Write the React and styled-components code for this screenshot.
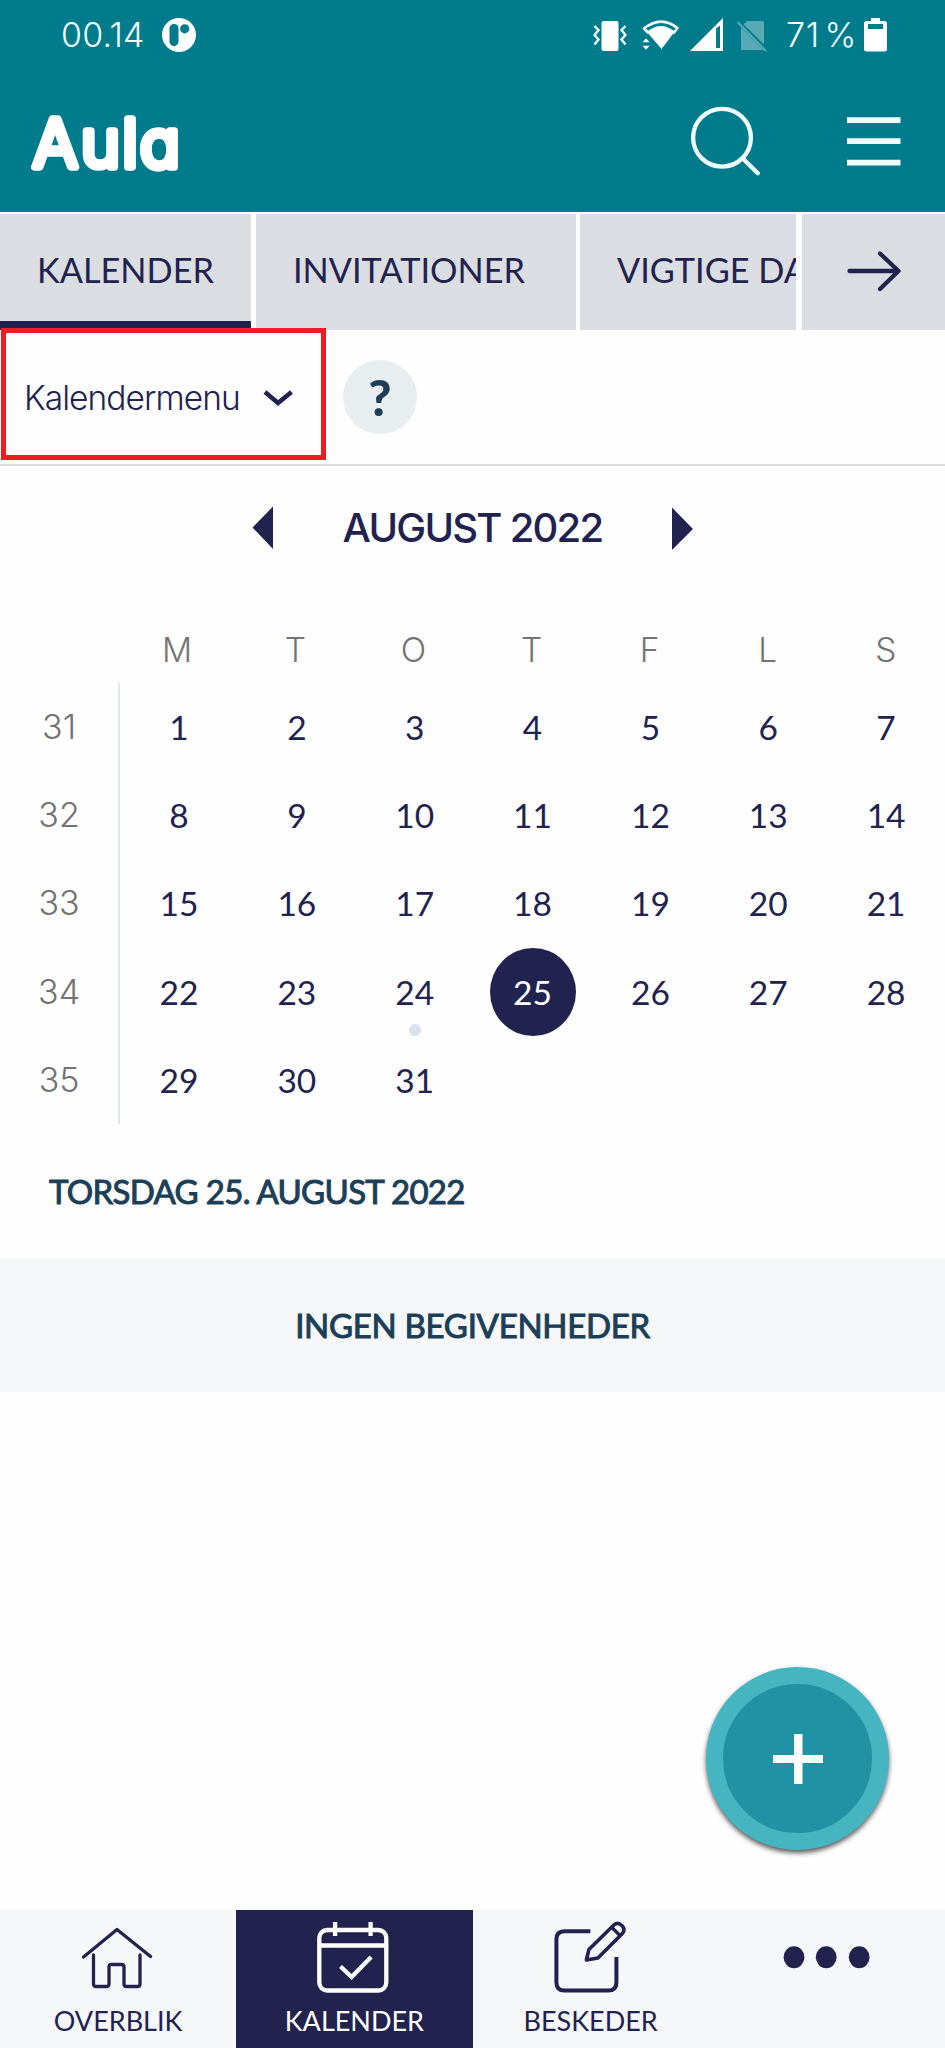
import React from 'react';
import styled, { createGlobalStyle } from 'styled-components';

const teal = '#007b8c';
const navy = '#22224f';
const petrol = '#1c3f57';
const mist = '#f5f7f9';
const slate = '#dadee2';
const lato = "Lato, 'Liberation Sans', sans-serif";
const inter = "Inter, 'Liberation Sans', sans-serif";

const GlobalStyle = createGlobalStyle`
  * { box-sizing: border-box; }
  body { margin: 0; background: #fefefe; }
  svg { display: block; flex: none; }
`;

const Screen = styled.div`
  position: relative;
  width: 945px;
  height: 2048px;
  display: flex;
  flex-direction: column;
  overflow: hidden;
  background: #fefefe;
  color: ${navy};
  font-family: ${lato};
`;

const StatusBar = styled.div`
  height: 70px;
  flex: none;
  display: flex;
  align-items: center;
  padding: 0 58px 0 61px;
  background: ${teal};
  color: #f2ffff;
`;

const StatusText = styled.span`
  width: ${(p) => p.$width}px;
  font: 300 34px/40px ${inter};
  letter-spacing: ${(p) => p.$spacing}px;
  white-space: nowrap;
`;

const PercentSign = styled.span`
  margin-left: 5px;
`;

const StatusIcons = styled.div`
  margin-left: auto;
  display: flex;
  align-items: center;
`;

const IconGap = styled.span`
  width: ${(p) => p.$width}px;
`;

const Header = styled.header`
  height: 142px;
  flex: none;
  display: flex;
  align-items: flex-start;
  padding: 24px 44px 0 30px;
  background: ${teal};
`;

const HeaderActions = styled.div`
  display: flex;
  gap: 86px;
  margin: 10px 0 0 auto;
`;

const LogoText = styled.text`
  font: 300 66px ${inter};
  font-feature-settings: 'cv11' 1;
  fill: #fff;
  stroke: #fff;
  stroke-width: 7.5px;
  stroke-linejoin: round;
`;

const TabBar = styled.nav`
  height: 118px;
  flex: none;
  display: flex;
  padding-top: 2px;
`;

const Tab = styled.div`
  width: ${(p) => p.$width}px;
  margin-right: ${(p) => p.$gap}px;
  flex: none;
  display: flex;
  align-items: center;
  padding: 0 0 4px 37px;
  overflow: hidden;
  white-space: nowrap;
  background: ${slate};
  box-shadow: ${(p) => (p.$active ? `inset 0 -9px ${navy}` : 'none')};
  font-size: 34.3px;
  line-height: 40px;
`;

const TabArrow = styled.div`
  flex: 1;
  display: flex;
  align-items: center;
  justify-content: center;
  background: ${slate};
`;

const Toolbar = styled.div`
  height: 136px;
  flex: none;
  display: flex;
  align-items: flex-start;
  padding-left: 1px;
  border-bottom: 2px solid #d9dadb;
`;

const MenuButton = styled.div`
  position: relative;
  top: -2px;
  width: 325px;
  height: 132px;
  display: flex;
  align-items: center;
  padding: 7px 0 0 18px;
  border: 5px solid #ec1c24;
  background: #fefefe;
`;

const MenuLabel = styled.span`
  width: 239px;
  font: 300 33.5px/40px ${inter};
  letter-spacing: -0.95px;
`;

const HelpButton = styled.div`
  width: 74px;
  height: 74px;
  margin: 30px 0 0 17px;
  border-radius: 50%;
  background: #e8edf0;
  color: ${petrol};
  font: 900 50px/74px ${lato};
  text-align: center;
`;

const MonthBar = styled.div`
  height: 126px;
  flex: none;
  display: flex;
  justify-content: space-between;
  align-items: center;
  padding: 0 252px 2px;
`;

const MonthTitle = styled.h1`
  margin: 0;
  font: 500 40px/48px ${inter};
  letter-spacing: -1.75px;
  white-space: nowrap;
`;

const WeekdayRow = styled.div`
  height: 91px;
  flex: none;
  display: grid;
  grid-template-columns: repeat(8, 1fr);
  align-items: end;
`;

const Weekday = styled.div`
  padding-bottom: 13px;
  text-align: center;
  color: #737373;
  font: 300 33.5px/40px ${inter};
`;

const Weeks = styled.div`
  height: 441px;
  flex: none;
  display: grid;
  grid-template-columns: 1fr 7fr;
`;

const WeekNumbers = styled.div`
  display: grid;
  grid-template-rows: repeat(5, 1fr);
  align-items: center;
  text-align: center;
  color: #737373;
  font: 300 34px/40px ${inter};
`;

const Days = styled.div`
  display: grid;
  grid-template-columns: repeat(7, 1fr);
  grid-template-rows: repeat(5, 1fr);
  place-items: center;
  border-left: 2px solid #dfe7eb;
`;

const Day = styled.div`
  position: relative;
  width: 86px;
  height: 88px;
  border-radius: 50%;
  background: ${(p) => (p.$selected ? navy : 'transparent')};
  color: ${(p) => (p.$selected ? '#fff' : navy)};
  font-size: 33.5px;
  line-height: 88px;
  text-align: center;
`;

const EventDot = styled.i`
  position: absolute;
  left: 37px;
  bottom: 0;
  width: 12px;
  height: 12px;
  border-radius: 50%;
  background: #d8e2ea;
`;

const DateHeading = styled.h2`
  height: 134px;
  flex: none;
  margin: 0;
  padding-left: 49px;
  color: ${petrol};
  font: 400 33px/134px ${lato};
  letter-spacing: -0.68px;
  -webkit-text-stroke: 1px ${petrol};
`;

const EmptyBand = styled.div`
  height: 134px;
  flex: none;
  background: ${mist};
  color: ${petrol};
  font: 400 33px/134px ${lato};
  letter-spacing: -0.3px;
  -webkit-text-stroke: 1px ${petrol};
  text-align: center;
`;

const AddButton = styled.div`
  position: absolute;
  left: 706px;
  top: 1667px;
  width: 183px;
  height: 183px;
  display: flex;
  align-items: center;
  justify-content: center;
  border: 17px solid #45b6c1;
  border-radius: 50%;
  background: #2191a4;
  box-shadow: 0 3px 5px rgba(0, 0, 0, 0.65);
`;

const BottomNav = styled.nav`
  height: 138px;
  flex: none;
  margin-top: auto;
  display: grid;
  grid-template-columns: repeat(4, 1fr);
  background: ${mist};
`;

const NavItem = styled.div`
  display: flex;
  flex-direction: column;
  align-items: center;
  padding-top: 8px;
  background: ${(p) => (p.$active ? navy : 'transparent')};
  color: ${(p) => (p.$active ? '#fff' : navy)};
`;

const NavLabel = styled.span`
  margin-top: 7px;
  font-size: 27px;
  line-height: 32px;
`;

const Logo = () => (
  <svg width="152" height="100" viewBox="30 94 152 100" role="img" aria-label="Aula">
    <LogoText x="33 81 122.300 140" y="166.500">Aula</LogoText>
  </svg>
);

const AppBadge = () => (
  <svg width="34" height="34" viewBox="162 18 34 34">
    <circle cx="179" cy="35" r="17" fill="#fff" />
    <rect x="169.5" y="24" width="9" height="22" rx="4.5" fill={teal} />
    <circle cx="184.7" cy="28.8" r="4.6" fill={teal} />
  </svg>
);

const VibrateIcon = () => (
  <svg width="34" height="34" viewBox="593 18 34 34" fill="none" stroke="#f2ffff" strokeWidth="2.4">
    <rect x="601.5" y="21" width="17" height="30" rx="2" fill="#fff" stroke="none" />
    <path d="M594.5 26l4 4-4 5 4 4.500-4 5M625.500 26l-4 4 4 5-4 4.500 4 5" />
  </svg>
);

const WifiIcon = () => (
  <svg width="38" height="34" viewBox="641 18 38 34">
    <path d="M644 28.500Q661 15 677.500 28L661.500 49Z" fill="#fff" />
    <path d="M644 28.500Q661 15 677.500 28L674 32.500Q661 22 648 32.500Z" fill={teal} stroke="#f2ffff" strokeWidth="2.600" strokeLinejoin="round" />
    <path d="M642 42.500l4-4.500 4 4.500zM642 45.500l4 4.500 4-4.500z" fill="#fff" stroke={teal} strokeWidth="0.500" />
  </svg>
);

const SignalIcon = () => (
  <svg width="34" height="34" viewBox="690 18 34 34">
    <path d="M690 51L723 18V51Z" fill="#fff" />
    <path d="M716 28.500L720 25.500V48H716Z" fill={teal} />
  </svg>
);

const NoSimIcon = () => (
  <svg width="32" height="34" viewBox="736 18 32 34">
    <path d="M747 21H762.500Q764 21 764 23V44.500L743.500 24.500ZM741 27.500V50H763.500Z" fill="#58a9b6" />
    <path d="M737.500 22L766 51" stroke="#58a9b6" strokeWidth="2" />
  </svg>
);

const BatteryIcon = () => (
  <svg width="23" height="34" viewBox="864 18 23 34">
    <path d="M871 18h9v3h4.500q2.500 0 2.500 2.500V49q0 2.500-2.500 2.500h-18Q864 51.500 864 49V23.500Q864 21 866.500 21H871Z" fill="#fff" />
    <rect x="868" y="24" width="15" height="5" fill={teal} />
  </svg>
);

const SearchIcon = () => (
  <svg width="70" height="72" viewBox="691 104 70 72" fill="none" stroke="#f2ffff" strokeWidth="4.300">
    <circle cx="722" cy="137.700" r="28.900" />
    <path d="M742.500 158.300L757.800 173.300" strokeLinecap="round" />
  </svg>
);

const MenuIcon = () => (
  <svg width="54" height="70" viewBox="847 104 54 70" fill="#f2ffff">
    <path d="M847 117.200h53.500v5.800H847zM847 138.300h53.500v5.800H847zM847 159.800h53.500v5.800H847z" />
  </svg>
);

const ArrowIcon = () => (
  <svg width="54" height="42" viewBox="846 250 54 42" fill="none" stroke={navy} strokeWidth="4.300" strokeLinecap="round" strokeLinejoin="round">
    <path d="M848.500 270H897M879 252.500L897.500 270L879 288" />
  </svg>
);

const ChevronIcon = () => (
  <svg width="30" height="16" viewBox="263 389 30 16" fill="none" stroke={navy} strokeWidth="4.500">
    <path d="M265 391L278 402L291.500 391" />
  </svg>
);

const PreviousIcon = () => (
  <svg width="21" height="46" viewBox="252 505 21 46" fill={navy}>
    <path d="M273 506.500V549L252.500 527.500Z" />
  </svg>
);

const NextIcon = () => (
  <svg width="21" height="46" viewBox="672 505 21 46" fill={navy}>
    <path d="M672 507.500V550L693 529Z" />
  </svg>
);

const PlusIcon = () => (
  <svg width="50" height="50" viewBox="0 0 50 50" fill="#fff">
    <path d="M21 0h8.500v21H50v8H29.500v21H21V29H0v-8h21z" />
  </svg>
);

const HomeIcon = () => (
  <svg width="72" height="80" viewBox="82 1918 72 80" fill="none" stroke={navy} strokeWidth="3.300" strokeLinecap="round" strokeLinejoin="round">
    <path d="M83.500 1957L117 1929.500L150.500 1956.500M93.500 1955V1984Q93.500 1986.500 96 1986.500H106.500Q109 1986.500 109 1984V1967Q109 1964.500 111.500 1964.500H121.500Q124 1964.500 124 1967V1984Q124 1986.500 126.500 1986.500H137.500Q140 1986.500 140 1984V1955" />
  </svg>
);

const CalendarIcon = () => (
  <svg width="74" height="80" viewBox="317.400 1918 74 80" fill="none" stroke="#fff" strokeWidth="4.300">
    <rect x="319.700" y="1930" width="67" height="60.500" rx="8" />
    <path d="M320 1945.500H387M335.500 1922V1936M371 1922V1936" />
    <path d="M342.500 1968L352 1977L370 1958.500" strokeLinecap="square" />
  </svg>
);

const ComposeIcon = () => (
  <svg width="76" height="80" viewBox="552.600 1918 76 80" fill="none" stroke={navy} strokeWidth="4">
    <path d="M590 1931.300H564Q556 1931.300 556 1939.300V1982.500Q556 1990.500 564 1990.500H608Q616 1990.500 616 1982.500V1957" />
    <path d="M586 1960L588.500 1949.500L613.500 1925Q617.500 1921.500 621.500 1925.500Q625.500 1929.500 622 1933.500L597.500 1958Z" strokeWidth="3.600" strokeLinejoin="round" />
    <path d="M611.500 1927.500L619.500 1935.500" strokeWidth="3.200" />
  </svg>
);

const MoreIcon = () => (
  <svg width="88" height="80" viewBox="782.500 1918 88 80" fill={navy}>
    <ellipse cx="793.500" cy="1957.300" rx="10.400" ry="11" />
    <ellipse cx="825.700" cy="1957.300" rx="10.400" ry="11" />
    <ellipse cx="858.700" cy="1957.300" rx="10.400" ry="11" />
  </svg>
);

const weekdays = ['M', 'T', 'O', 'T', 'F', 'L', 'S'];
const weeks = [31, 32, 33, 34, 35];
const days = Array.from({ length: 31 }, (_, i) => i + 1);

export default function App() {
  return (
    <Screen>
      <GlobalStyle />
      <StatusBar>
        <StatusText $width={101} $spacing={0.2}>00.14</StatusText>
        <AppBadge />
        <StatusIcons>
          <VibrateIcon />
          <IconGap $width={14} />
          <WifiIcon />
          <IconGap $width={11} />
          <SignalIcon />
          <IconGap $width={12} />
          <NoSimIcon />
          <IconGap $width={18} />
          <StatusText $width={78} $spacing={0.6}>71<PercentSign>%</PercentSign></StatusText>
          <BatteryIcon />
        </StatusIcons>
      </StatusBar>
      <Header>
        <Logo />
        <HeaderActions>
          <SearchIcon />
          <MenuIcon />
        </HeaderActions>
      </Header>
      <TabBar>
        <Tab $width={251} $gap={5} $active>KALENDER</Tab>
        <Tab $width={320} $gap={4}>INVITATIONER</Tab>
        <Tab $width={216} $gap={6}>VIGTIGE DATOER</Tab>
        <TabArrow><ArrowIcon /></TabArrow>
      </TabBar>
      <Toolbar>
        <MenuButton>
          <MenuLabel>Kalendermenu</MenuLabel>
          <ChevronIcon />
        </MenuButton>
        <HelpButton>?</HelpButton>
      </Toolbar>
      <MonthBar>
        <PreviousIcon />
        <MonthTitle>AUGUST 2022</MonthTitle>
        <NextIcon />
      </MonthBar>
      <WeekdayRow>
        <span />
        {weekdays.map((name, i) => <Weekday key={i}>{name}</Weekday>)}
      </WeekdayRow>
      <Weeks>
        <WeekNumbers>
          {weeks.map((week) => <span key={week}>{week}</span>)}
        </WeekNumbers>
        <Days>
          {days.map((day) => (
            <Day key={day} $selected={day === 25}>
              {day}
              {day === 24 && <EventDot />}
            </Day>
          ))}
        </Days>
      </Weeks>
      <DateHeading>TORSDAG 25. AUGUST 2022</DateHeading>
      <EmptyBand>INGEN BEGIVENHEDER</EmptyBand>
      <AddButton><PlusIcon /></AddButton>
      <BottomNav>
        <NavItem>
          <HomeIcon />
          <NavLabel>OVERBLIK</NavLabel>
        </NavItem>
        <NavItem $active>
          <CalendarIcon />
          <NavLabel>KALENDER</NavLabel>
        </NavItem>
        <NavItem>
          <ComposeIcon />
          <NavLabel>BESKEDER</NavLabel>
        </NavItem>
        <NavItem>
          <MoreIcon />
        </NavItem>
      </BottomNav>
    </Screen>
  );
}
